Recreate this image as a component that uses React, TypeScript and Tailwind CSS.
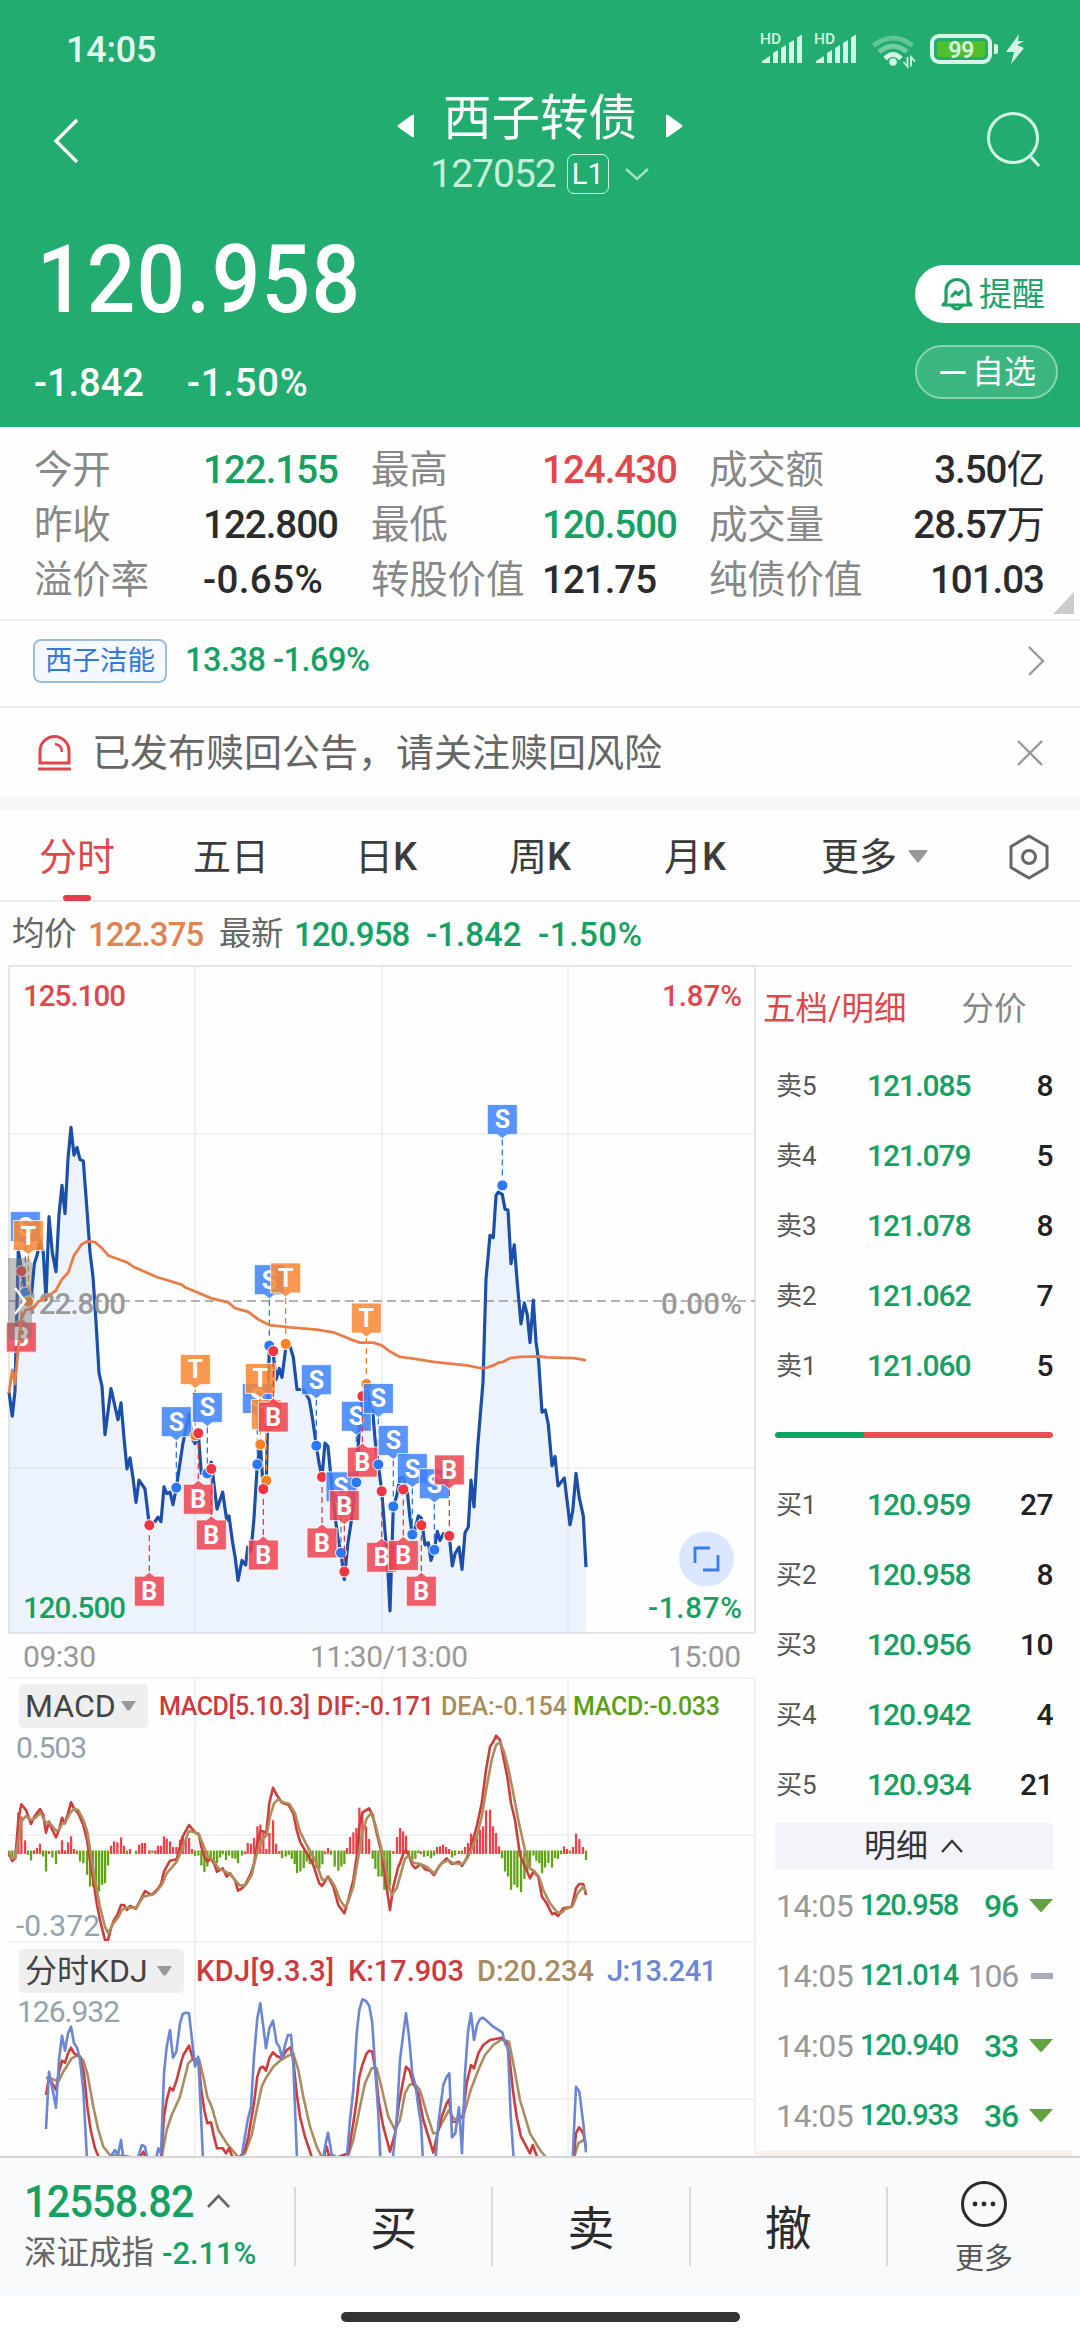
import type { ReactNode } from "react";

type Marker = { kind: "S" | "B" | "T"; x: number; y: number; below?: boolean };

const GREEN = "text-[#16a163]";
const RED = "text-[#e0474c]";
const DARK = "text-[#2b2b2b]";

const quotes = [
  { label: "今开", value: "122.155", tone: GREEN },
  { label: "最高", value: "124.430", tone: RED },
  { label: "成交额", value: "3.50亿", tone: DARK },
  { label: "昨收", value: "122.800", tone: DARK },
  { label: "最低", value: "120.500", tone: GREEN },
  { label: "成交量", value: "28.57万", tone: DARK },
  { label: "溢价率", value: "-0.65%", tone: DARK },
  { label: "转股价值", value: "121.75", tone: DARK },
  { label: "纯债价值", value: "101.03", tone: DARK },
];

const asks = [
  ["卖5", "121.085", "8"],
  ["卖4", "121.079", "5"],
  ["卖3", "121.078", "8"],
  ["卖2", "121.062", "7"],
  ["卖1", "121.060", "5"],
];

const bids = [
  ["买1", "120.959", "27"],
  ["买2", "120.958", "8"],
  ["买3", "120.956", "10"],
  ["买4", "120.942", "4"],
  ["买5", "120.934", "21"],
];

const trades = [
  { price: "120.958", qty: "96", down: true },
  { price: "121.014", qty: "106", down: false },
  { price: "120.940", qty: "33", down: true },
  { price: "120.933", qty: "36", down: true },
];

const priceLine =
  "27,968 37,1022 45,965 55,650 64,690 76,740 85,765 95,745 103,680 112,660 120,625 130,655 138,760 147,575 157,655 168,698 177,570 186,505 195,568 204,445 213,375 222,437 231,420 240,447 250,450 261,560 270,655 279,710 288,810 297,925 306,955 315,1063 333,960 354,1030 363,992 372,1070 381,1140 390,1115 399,1160 408,1215 417,1165 435,1185 448,1266 465,1258 474,1248 483,1258 492,1180 500,1195 510,1192 519,1220 529,1182 548,1085 567,1017 576,1070 585,1083 595,1060 604,1150 617,1150 634,1125 651,1230 668,1192 680,1255 687,1245 697,1300 706,1340 714,1390 726,1345 737,1355 743,1315 753,1325 762,1250 772,1130 781,1085 790,1185 799,1166 808,862 819,876 828,940 838,915 846,935 857,870 870,865 880,890 891,962 910,962 928,985 938,1030 949,1088 958,1130 966,1158 975,1082 984,1090 993,1160 1004,1240 1015,1300 1023,1328 1033,1388 1043,1310 1055,1250 1068,1170 1078,1050 1087,977 1099,950 1110,1000 1118,1010 1126,1080 1135,1130 1145,1190 1155,1280 1162,1340 1170,1458 1180,1224 1190,1200 1200,1160 1210,1160 1222,1190 1230,1250 1237,1287 1245,1275 1255,1245 1264,1250 1275,1310 1285,1305 1293,1345 1303,1321 1312,1280 1320,1300 1330,1285 1348,1290 1357,1357 1365,1330 1377,1315 1386,1365 1395,1283 1405,1270 1413,1165 1422,1225 1433,1090 1449,945 1458,715 1470,617 1480,622 1488,528 1495,520 1507,525 1515,558 1524,560 1533,680 1543,638 1552,725 1563,815 1573,768 1582,795 1590,857 1600,762 1608,855 1616,900 1626,1013 1636,1008 1645,1040 1656,1133 1665,1112 1674,1178 1693,1160 1710,1265 1718,1235 1728,1150 1738,1205 1750,1245 1758,1360";

const averageLine =
  "27,970 37,918 45,950 55,870 64,805 76,785 103,778 115,765 138,757 168,740 186,715 205,700 222,662 245,637 262,630 285,632 305,645 325,662 380,677 400,687 470,710 545,727 555,733 635,758 685,767 705,780 745,788 775,805 810,818 870,823 950,828 1000,834 1060,852 1080,857 1120,857 1145,863 1170,877 1200,889 1250,894 1300,900 1400,908 1440,914 1458,914 1480,908 1495,902 1510,900 1530,892 1560,889 1620,888 1640,890 1720,892 1740,894 1758,897";

const difLine =
  "27,640 37,663 46,655 55,540 64,493 78,510 93,552 103,530 120,507 130,525 138,578 147,545 157,570 168,592 177,570 186,533 195,550 204,520 213,487 222,505 235,520 250,555 261,600 270,660 280,720 290,790 300,840 315,900 324,900 333,865 342,840 352,825 363,795 372,795 381,810 390,798 408,806 435,753 455,765 475,745 483,732 492,695 510,662 530,658 540,620 548,590 567,555 585,577 597,585 604,620 613,650 622,665 632,655 642,670 651,695 668,685 680,710 690,700 706,722 714,752 726,745 735,735 753,700 762,670 772,610 781,572 793,575 799,580 808,490 819,443 830,465 846,488 866,495 880,520 890,570 900,605 920,640 938,670 958,730 966,738 984,710 1000,740 1015,795 1033,820 1045,780 1060,720 1070,650 1078,560 1087,518 1107,505 1118,525 1130,580 1145,640 1158,730 1170,810 1180,740 1195,680 1200,670 1210,640 1218,630 1228,650 1237,675 1246,685 1262,672 1275,688 1290,692 1302,705 1320,675 1340,655 1355,672 1377,665 1386,678 1400,655 1413,620 1430,560 1445,490 1458,390 1470,320 1480,305 1488,287 1500,300 1510,350 1522,410 1533,490 1545,540 1560,645 1575,680 1590,715 1600,695 1615,710 1626,770 1640,790 1656,822 1665,820 1674,828 1690,805 1715,800 1728,745 1738,732 1750,732 1758,765";

const deaLine =
  "27,635 37,655 46,655 55,600 64,545 78,528 93,540 108,532 122,518 135,545 150,550 168,572 177,570 186,552 195,548 213,515 222,507 235,510 250,540 262,575 272,640 285,720 300,800 315,860 325,880 340,850 355,832 365,810 380,803 408,803 430,770 450,765 465,760 485,735 500,700 530,665 545,630 567,573 595,580 608,610 620,645 640,660 655,685 670,692 690,702 720,737 737,735 755,705 768,650 785,600 800,585 810,530 822,490 835,478 850,487 868,492 885,520 900,575 920,615 945,660 967,720 990,715 1005,740 1020,780 1035,802 1045,785 1060,740 1075,650 1087,580 1100,535 1113,520 1125,550 1140,610 1155,670 1165,730 1175,765 1190,745 1200,710 1215,655 1228,648 1240,668 1260,672 1280,680 1302,700 1325,670 1345,660 1360,670 1388,672 1405,650 1430,590 1445,530 1460,440 1475,360 1488,315 1500,307 1512,335 1525,385 1540,460 1555,540 1575,630 1590,685 1605,695 1617,710 1630,750 1650,790 1670,815 1683,820 1695,808 1718,798 1733,760 1750,740 1758,755";

const macdBars =
  "27,-15 37,-22 46,-15 55,122 64,110 75,38 84,-10 93,-27 102,8 111,15 120,28 129,-15 138,-60 147,6 157,-18 168,-38 177,8 186,38 195,8 204,32 213,50 222,12 231,-8 240,-30 250,-35 261,-70 270,-105 279,-105 288,-110 297,-120 306,-100 315,-95 324,-42 333,22 342,35 352,32 363,47 372,22 381,-8 390,12 408,-8 417,25 426,30 435,30 448,8 457,-5 466,8 474,22 483,22 492,50 500,43 510,35 519,18 529,18 540,40 548,50 557,40 567,45 576,12 585,-14 595,-12 604,-42 613,-62 622,-45 632,-22 642,-30 651,-35 660,-18 668,-8 678,-26 687,-12 697,-20 706,-22 714,-35 726,-12 735,5 743,30 753,28 762,45 772,80 781,85 790,60 799,12 808,60 819,98 828,28 838,6 846,-20 857,-15 866,-10 875,-22 884,-38 891,-65 901,-60 911,-50 920,-30 929,-38 938,-40 949,-50 958,-52 967,-38 975,5 984,15 993,-10 1004,-45 1015,-58 1024,-45 1033,-38 1041,15 1050,48 1060,62 1069,75 1078,136 1087,120 1098,80 1107,42 1118,-22 1126,-52 1135,-75 1145,-75 1153,-115 1162,-115 1170,-102 1180,6 1191,48 1200,75 1209,65 1218,52 1227,-10 1237,-25 1246,-22 1255,-5 1263,5 1272,-16 1283,-14 1293,-20 1302,-12 1311,18 1320,20 1329,25 1338,18 1347,12 1356,-18 1365,-12 1377,6 1386,-8 1395,18 1404,30 1413,58 1422,45 1431,55 1440,70 1449,80 1458,128 1470,130 1479,80 1488,60 1497,20 1506,-20 1515,-60 1524,-75 1533,-115 1543,-100 1552,-108 1563,-122 1573,-82 1582,-60 1590,-45 1600,-12 1609,-28 1618,-35 1626,-65 1635,-48 1645,-35 1656,-48 1665,-20 1674,-22 1683,-8 1692,20 1701,12 1710,-6 1719,18 1728,58 1738,42 1749,18 1758,-26"
    .split(" ")
    .map((p) => p.split(",").map(Number));

const kLine =
  "138,1365 147,1310 157,1330 168,1350 177,1295 186,1262 195,1268 204,1240 213,1223 222,1240 240,1250 252,1300 262,1400 272,1470 285,1525 300,1560 415,1560 430,1535 440,1560 483,1555 492,1430 500,1380 510,1343 519,1352 530,1320 540,1280 550,1245 567,1217 580,1260 595,1260 604,1350 613,1410 622,1450 633,1447 642,1490 651,1525 668,1525 678,1540 687,1525 697,1550 715,1560 735,1530 745,1490 762,1390 772,1310 781,1283 790,1280 798,1292 808,1255 819,1237 830,1248 845,1255 860,1230 872,1222 880,1260 890,1360 900,1430 915,1490 935,1550 965,1570 980,1520 990,1560 1045,1540 1060,1450 1070,1380 1078,1310 1087,1275 1100,1240 1108,1232 1117,1235 1126,1290 1137,1390 1150,1460 1170,1535 1185,1480 1197,1390 1208,1330 1218,1280 1228,1290 1240,1330 1255,1360 1270,1440 1300,1538 1310,1490 1325,1430 1340,1390 1347,1378 1356,1445 1370,1445 1377,1430 1388,1430 1400,1330 1413,1275 1422,1285 1435,1240 1450,1215 1470,1200 1505,1193 1520,1210 1528,1250 1540,1360 1550,1430 1563,1490 1590,1540 1598,1515 1615,1560 1720,1560 1728,1480 1737,1462 1750,1480 1758,1520";

const dLine =
  "138,1313 160,1318 175,1325 190,1295 215,1255 235,1245 250,1262 262,1300 280,1400 295,1470 310,1520 330,1545 380,1548 400,1555 485,1550 500,1470 515,1425 540,1370 565,1270 580,1255 598,1260 610,1310 622,1370 635,1400 655,1470 680,1510 715,1552 735,1540 755,1485 770,1410 785,1340 800,1310 820,1280 840,1262 860,1250 880,1240 895,1290 910,1370 930,1460 950,1520 965,1550 1000,1545 1020,1560 1040,1560 1060,1500 1080,1400 1095,1330 1115,1285 1130,1285 1145,1345 1165,1430 1185,1470 1200,1440 1215,1360 1228,1335 1243,1330 1260,1350 1280,1420 1300,1480 1310,1480 1325,1450 1347,1410 1360,1435 1375,1440 1390,1430 1412,1350 1435,1290 1455,1245 1480,1215 1505,1198 1527,1205 1540,1270 1560,1380 1590,1480 1620,1530 1640,1555 1720,1560 1735,1510 1750,1500 1758,1505";

const jLine =
  "138,1467 147,1295 157,1345 168,1403 177,1260 186,1187 195,1232 204,1180 213,1160 222,1210 232,1225 240,1260 250,1350 262,1575 325,1560 345,1530 354,1545 363,1500 372,1570 412,1560 425,1515 435,1520 445,1570 466,1570 475,1525 483,1540 492,1300 500,1220 510,1170 519,1253 529,1235 540,1150 548,1122 558,1118 567,1120 576,1200 585,1280 595,1250 601,1380 610,1580 723,1560 743,1440 753,1400 762,1250 772,1135 781,1090 790,1160 798,1225 808,1165 819,1142 830,1210 838,1220 846,1255 855,1215 864,1185 873,1185 880,1270 892,1580 966,1580 975,1520 984,1478 993,1530 1000,1580 1038,1580 1050,1440 1060,1350 1070,1180 1078,1110 1087,1078 1098,1083 1108,1098 1117,1150 1126,1290 1135,1420 1142,1580 1176,1580 1190,1440 1200,1260 1210,1180 1218,1120 1227,1190 1237,1300 1247,1340 1255,1400 1263,1450 1270,1580 1305,1580 1315,1450 1330,1335 1340,1310 1348,1300 1356,1492 1366,1480 1377,1402 1386,1540 1395,1300 1404,1175 1413,1120 1422,1200 1431,1155 1440,1137 1449,1133 1460,1142 1480,1160 1507,1177 1515,1210 1524,1225 1532,1430 1543,1580 1717,1580 1728,1340 1738,1355 1750,1450 1758,1537";

// x, y is the traded point; the flag hangs 66px away from it
const markers: Marker[] = [
  { kind: "S", x: 76, y: 745 },
  { kind: "B", x: 64, y: 697, below: true },
  { kind: "T", x: 85, y: 765 },
  { kind: "B", x: 448, y: 1266, below: true },
  { kind: "S", x: 529, y: 1182 },
  { kind: "T", x: 586, y: 1065 },
  { kind: "S", x: 622, y: 1150 },
  { kind: "B", x: 595, y: 1060, below: true },
  { kind: "B", x: 634, y: 1140, below: true },
  { kind: "S", x: 772, y: 1130 },
  { kind: "T", x: 799, y: 1166 },
  { kind: "T", x: 781, y: 1085 },
  { kind: "B", x: 790, y: 1185, below: true },
  { kind: "S", x: 808, y: 864 },
  { kind: "B", x: 820, y: 876, below: true },
  { kind: "T", x: 857, y: 860 },
  { kind: "S", x: 949, y: 1088 },
  { kind: "B", x: 966, y: 1158, below: true },
  { kind: "S", x: 1023, y: 1328 },
  { kind: "B", x: 1033, y: 1370 },
  { kind: "S", x: 1069, y: 1170 },
  { kind: "T", x: 1099, y: 950 },
  { kind: "B", x: 1087, y: 977, below: true },
  { kind: "S", x: 1135, y: 1130 },
  { kind: "B", x: 1145, y: 1190, below: true },
  { kind: "S", x: 1180, y: 1224 },
  { kind: "S", x: 1237, y: 1287 },
  { kind: "B", x: 1210, y: 1186, below: true },
  { kind: "B", x: 1264, y: 1266, below: true },
  { kind: "S", x: 1303, y: 1321 },
  { kind: "B", x: 1348, y: 1290 },
  { kind: "S", x: 1507, y: 505 },
];

const flagFill = { S: "#3d82fa", B: "#ee4452", T: "#fa8733" };
const dotFill = { S: "#2878f8", B: "#ee3542", T: "#fb8123" };

function scale(points: string, sy: number, oy: number) {
  return points
    .split(" ")
    .map((p) => {
      const [x, y] = p.split(",").map(Number);
      return `${(x / 3).toFixed(1)},${(y / sy + oy).toFixed(1)}`;
    })
    .join(" ");
}

function StatusIcons() {
  const tops = [50, 45, 40, 34.5];
  return (
    <svg width="270" height="40" viewBox="755 30 270 40" fill="#d5f6e6">
      {[761, 815].map((x) => (
        <g key={x}>
          <text x={x - 1} y="44" fontSize="15.500" fontWeight="500">
            HD
          </text>
          <path d={`M${x + 1} 63v-2l8-5v7z`} />
          {tops.map((top, i) => (
            <path key={top} d={`M${x + 12 + i * 8} 63V${top + 3}l5-3V63z`} />
          ))}
        </g>
      ))}
      <g fill="none" stroke="#d5f6e6" strokeWidth="4.800">
        <path d="M873.500 45.500q19.500-15 39 0" opacity=".35" />
        <path d="M879 52q14-11.500 28 0" opacity=".45" />
        <path d="M885 58.500q8-8 16 0" />
      </g>
      <circle cx="893" cy="62" r="3.800" />
      <path d="M907.500 57v9.500l-4-4.500M911 66.500V57l4 4.500" fill="none" stroke="#d5f6e6" strokeWidth="1.800" />
      <rect x="932" y="36" width="58" height="26" rx="7" fill="none" stroke="#d5f6e6" strokeWidth="4" />
      <rect x="937" y="41" width="48" height="16" rx="2" fill="#4fc02b" />
      <path d="M994 44h2q2 0 2 3v4q0 3-2 3h-2z" />
      <text x="961" y="57.500" fontSize="23.500" fontWeight="600" textAnchor="middle" letterSpacing="-0.800">
        99
      </text>
      <path d="M1019 34l-13 18h8l-3 12 13-16-7-3 7-4h-6z" />
    </svg>
  );
}

function Header() {
  return (
    <header className="h-[427px] bg-[#22ac6f] text-white">
      <div className="flex h-[80px] items-end justify-between pl-[66px] pr-[55px]">
        <span className="mb-[12px] text-[36px] font-medium leading-none tracking-[-0.2px] text-[#e3fbef]">14:05</span>
        <div className="mb-[10px] h-10">
          <StatusIcons />
        </div>
      </div>

      <div className="flex h-[130px] justify-between pl-[52px] pr-[38px]">
        <svg className="mt-[38px]" width="30" height="46" viewBox="0 0 30 46" fill="none" stroke="#fff" strokeWidth="3.4">
          <path d="M25 2L4 23l21 21" />
        </svg>
        <div className="ml-[14px] flex flex-col items-center">
          <div className="mt-[11px] flex h-[56px] items-center gap-[28px]">
            <svg className="mt-[14px]" width="18" height="24" viewBox="0 0 18 24" fill="#fff">
              <path d="M17 2q0-2-2-1L1 11q-1 1 0 2l14 10q2 1 2-1z" />
            </svg>
            <h1 className="text-[48.5px] leading-none">西子转债</h1>
            <svg className="mt-[14px] rotate-180" width="18" height="24" viewBox="0 0 18 24" fill="#fff">
              <path d="M17 2q0-2-2-1L1 11q-1 1 0 2l14 10q2 1 2-1z" />
            </svg>
          </div>
          <div className="mt-[6px] flex h-[42px] items-center">
            <span className="text-[39px] leading-none tracking-[-1px] text-[#c5f0db]">127052</span>
            <span className="ml-[11px] flex h-[40px] w-[42px] items-center justify-center rounded-[7px] border-[1.5px] border-[#d5f6e6] text-[29px] leading-none">
              L1
            </span>
            <svg className="ml-[15px]" width="26" height="14" viewBox="0 0 26 14" fill="none" stroke="#a5e2c5" strokeWidth="2.4">
              <path d="M2 2l11 10L24 2" />
            </svg>
          </div>
        </div>
        <svg className="mt-[31px] translate-x-[2px]" width="58" height="58" viewBox="0 0 58 58" fill="none" stroke="#d5f6e6" strokeWidth="3">
          <circle cx="27" cy="27" r="24.5" />
          <path d="M45 46l8 9" />
        </svg>
      </div>

      <div className="flex h-[217px] justify-between">
        <div className="pl-[34px]">
          <p className="mt-[25px] origin-left scale-x-[0.9] pl-[3px] text-[95px] font-medium leading-[90px] tracking-[1.5px]">120.958</p>
          <div className="mt-[37px] flex gap-[43px] text-[38px] font-medium leading-[42px]">
            <span>-1.842</span>
            <span className="tracking-[0.9px]">-1.50%</span>
          </div>
        </div>
        <div className="mt-[55px] w-[165px]">
          <div className="flex h-[58px] items-center rounded-l-full bg-white pl-[25px] text-[33px] leading-none text-[#22a36a]">
            <svg width="34" height="34" viewBox="0 0 34 34" fill="none" stroke="#1fa065" strokeWidth="3.200" strokeLinejoin="round" strokeLinecap="round">
              <path d="M6 25V13.500a11 11 0 0 1 22 0V25l3 3H3z" />
              <path d="M12 29q5 6 10 0M12 19l3.500-4 3 2.500L22 14" />
            </svg>
            <span className="ml-[5px]">提醒</span>
          </div>
          <div className="mt-[22px] flex h-[54px] w-[143px] items-center whitespace-nowrap rounded-full border-2 border-[#8ad5b3] bg-white/12 pl-[23px] text-[32px] leading-none">
            <span className="mr-[6px] h-[3px] w-[26px] shrink-0 rounded-full bg-white" />
            自选
          </div>
        </div>
      </div>
    </header>
  );
}

function Quotes() {
  return (
    <section className="relative h-[194px] border-b-2 border-[#ececec] pl-[34px] pr-[36px] pt-[15px]">
      <div className="grid grid-cols-[169px_168px_171px_167px_170px_auto] text-[38.5px] leading-[55px]">
        {quotes.map((q, i) => (
          <div key={q.label} className="contents">
            <span className="whitespace-nowrap tracking-[-0.2px] text-[#888]">{q.label}</span>
            <span
              className={`whitespace-nowrap font-medium ${q.value.includes("%") ? "tracking-[0.4px]" : "tracking-[-1px]"} ${q.tone} ${i % 3 === 2 ? "text-right" : ""}`}
            >
              {q.value.replace(/[亿万]/, "")}
              <span className="font-normal">{q.value.match(/[亿万]/)?.[0]}</span>
            </span>
          </div>
        ))}
      </div>
      <svg className="absolute bottom-[5px] right-[6px]" width="21" height="22" viewBox="0 0 21 22" fill="#ccc">
        <path d="M21 0v22H0z" />
      </svg>
    </section>
  );
}

function Notices() {
  return (
    <>
      <section className="flex h-[87px] items-center border-b-2 border-[#ececec] pb-[6px] pl-[33px] pr-[35px]">
        <span className="flex h-[44px] w-[134px] items-center justify-center rounded-[8px] border-2 border-[#9dbde6] bg-[#f4f9ff] text-[27.5px] leading-none text-[#3478dc]">
          西子洁能
        </span>
        <span className="ml-[18px] text-[32.5px] font-medium leading-none tracking-[-0.5px] text-[#16a163]">13.38 -1.69%</span>
        <svg className="ml-auto" width="17" height="30" viewBox="0 0 17 30" fill="none" stroke="#999" strokeWidth="2.4">
          <path d="M1 1l14 14L1 29" />
        </svg>
      </section>
      <section className="flex h-[88px] items-center pl-[37px] pr-[37px] pt-px">
        <svg width="35" height="36" viewBox="0 0 35 36" fill="none" stroke="#e2444b" strokeWidth="3">
          <path d="M3 28V16a14.5 14.5 0 0 1 29 0v12zM1 34h33" />
          <path d="M18 9q7 1 7 8" strokeWidth="2.4" />
        </svg>
        <p className="ml-[20px] text-[38px] leading-none text-[#666]">已发布赎回公告，请关注赎回风险</p>
        <svg className="ml-auto" width="26" height="26" viewBox="0 0 26 26" stroke="#999" strokeWidth="2.4">
          <path d="M1 1l24 24M25 1L1 25" />
        </svg>
      </section>
    </>
  );
}

function Tabs() {
  return (
    <nav className="h-[106px] border-b-2 border-[#ececec] border-t-[14px] border-t-[#f7f7f7]">
      <div className="flex h-[90px] items-center pl-[39px] pr-[30px] pt-[3px] text-[38px] leading-none text-[#3c3c3c]">
        <span className="relative flex h-full w-[154px] items-center text-[#e0474c]">
          分时
          <i className="absolute bottom-[-1px] left-[24px] h-[6px] w-[28px] rounded-full bg-[#e43d49]" />
        </span>
        <span className="w-[162px]">五日</span>
        <span className="w-[154px]">
          日<span className="font-medium">K</span>
        </span>
        <span className="w-[155px]">
          周<span className="font-medium">K</span>
        </span>
        <span className="w-[157px]">
          月<span className="font-medium">K</span>
        </span>
        <span className="flex items-center">
          更多
          <svg className="ml-[11px]" width="20" height="13" viewBox="0 0 20 13" fill="#999">
            <path d="M1 0h18q1 0 0 2l-8 10q-1 1-2 0L1 2q-1-2 0-2z" />
          </svg>
        </span>
        <svg className="ml-auto" width="42" height="46" viewBox="0 0 42 46" fill="none" stroke="#666" strokeWidth="3" strokeLinejoin="round">
          <path d="M21 2l18 10.500v21L21 44 3 33.500v-21z" />
          <circle cx="21" cy="23" r="6.500" />
        </svg>
      </div>
    </nav>
  );
}

function Flag({ kind, x, y, below }: Marker) {
  const cx = x / 3;
  const cy = y / 2.24 - 5;
  const fy = below ? cy + 66 : cy - 66;
  const edge = below ? fy - 18 : fy + 18;
  const d = below
    ? `M${cx - 15} ${fy - 15}h10l5-4 5 4h10v30h-30z`
    : `M${cx - 15} ${fy - 15}h30v30h-10l-5 4-5-4h-10z`;
  return (
    <g>
      <path d={`M${cx} ${cy}V${edge}`} stroke={dotFill[kind]} strokeWidth="1.3" strokeDasharray="6 4" />
      <circle cx={cx} cy={cy} r="5.500" fill={dotFill[kind]} stroke="#fff" strokeWidth="1" />
      <path d={d} fill={flagFill[kind]} fillOpacity=".86" stroke="#fff" strokeOpacity=".8" strokeWidth="1" strokeLinejoin="round" />
      <text x={cx} y={fy + 9} fontSize="25" fontWeight="700" fill="#fff" textAnchor="middle">
        {kind}
      </text>
    </g>
  );
}

function PriceChart() {
  const line = scale(priceLine, 2.24, -5);
  return (
    <svg className="block" width="756" height="711" viewBox="0 0 756 711" fontWeight="500" fontSize="29.500">
      <path d="M195 1v667M382 1v667M568 1v667M9 169h746M9 503h746" stroke="#ededed" strokeWidth="1.500" />
      <rect x="9" y="1" width="746" height="667" fill="none" stroke="#e6e6e6" strokeWidth="2" />
      <polygon points={`9,668 ${line} 586,668`} fill="#c8dbfa" fillOpacity=".3" />
      <path d="M9 336h746" stroke="#999" strokeWidth="1.500" strokeDasharray="9 5" />
      <polyline points={line} fill="none" stroke="#1c50a8" strokeWidth="3.200" strokeLinejoin="round" />
      <g fill="#e0474c">
        <text x="23" y="41" textLength="103">125.100</text>
        <text x="662" y="41" textLength="80">1.87%</text>
      </g>
      <g fill="#999">
        <text x="23" y="349" textLength="103">122.800</text>
        <text x="661" y="349" textLength="81">0.00%</text>
      </g>
      <g fill="#16a163">
        <text x="23" y="653" textLength="103">120.500</text>
        <text x="648" y="653" textLength="94">-1.87%</text>
      </g>
      {markers.map((m, i) => (
        <Flag key={i} {...m} />
      ))}
      <polyline points={scale(averageLine, 2.24, -5)} fill="none" stroke="#e87d47" strokeWidth="2.800" strokeLinejoin="round" />
      <path d="M8 293h16q8 0 8 8v66q0 8-8 8H8z" fill="#777" fillOpacity=".45" />
      <path d="M15 323l10 13-10 13" fill="none" stroke="#fff" strokeWidth="2.500" />
      <circle cx="706.500" cy="594" r="27.500" fill="#dbe7fe" />
      <path d="M710 583h-15v15M703 605h15v-15" fill="none" stroke="#3b7de8" strokeWidth="2.800" />
      <g fill="#999" fontSize="30" fontWeight="400">
        <text x="23" y="702" textLength="73">09:30</text>
        <text x="310" y="702" textLength="158">11:30/13:00</text>
        <text x="668" y="702" textLength="73">15:00</text>
      </g>
    </svg>
  );
}

function Panel({ height, label, legend, chip, children }: { height: string; label: string; legend: ReactNode; chip: string; children: ReactNode }) {
  return (
    <div className={`relative overflow-hidden ${height}`}>
      {children}
      <div className="absolute left-[19px] top-[8px] flex h-[44px] items-center whitespace-nowrap">
        <span className={`flex h-[44px] shrink-0 items-center justify-between rounded-[5px] bg-[#efefef] pl-[6px] pr-[12px] text-[32px] leading-none text-[#444] ${chip}`}>
          {label}
          <svg width="15" height="10" viewBox="0 0 15 10" fill="#999">
            <path d="M0 0h15L9 9q-1.500 1-3 0z" />
          </svg>
        </span>
        {legend}
      </div>
    </div>
  );
}

function MacdPanel() {
  return (
    <Panel
      height="h-[265px]"
      label="MACD"
      chip="w-[129px]"
      legend={
        <svg className="block" width="600" height="44" viewBox="148 0 600 44" fontSize="25" fontWeight="500">
          <text x="159" y="31" textLength="151" fill="#cb3b3e">MACD[5.10.3]</text>
          <text x="317" y="31" textLength="117" fill="#cb3b3e">DIF:-0.171</text>
          <text x="441" y="31" textLength="126" fill="#a98d60">DEA:-0.154</text>
          <text x="573" y="31" textLength="147" fill="#5a9e1a">MACD:-0.033</text>
        </svg>
      }
    >
      <svg className="block" width="756" height="265" viewBox="0 1676 756 265">
        <path d="M195 1678v264M382 1678v264M568 1678v264M755 1678v264M8 1678h748M8 1835h748" stroke="#ededed" strokeWidth="1.500" />
        <g fill="#94a3ae" fontSize="30">
          <text x="16" y="1758" textLength="71">0.503</text>
          <text x="16" y="1936" textLength="84">-0.372</text>
        </g>
        {macdBars.map(([x, h]) => (
          <rect
            key={x}
            x={x / 3 - 1.1}
            y={h > 0 ? 1853 - h / 3 : 1850.500}
            width="2.300"
            height={Math.abs(h) / 3 + 1}
            fill={h > 0 ? "#f0414a" : "#62a315"}
          />
        ))}
        <polyline points={scale(difLine, 3, 1640)} fill="none" stroke="#cd3d3c" strokeWidth="2.600" strokeLinejoin="round" />
        <polyline points={scale(deaLine, 3, 1640)} fill="none" stroke="#ae8d5c" strokeWidth="2.600" strokeLinejoin="round" />
      </svg>
    </Panel>
  );
}

function KdjPanel() {
  return (
    <Panel
      height="h-[215px]"
      label="分时KDJ"
      chip="w-[165px]"
      legend={
        <svg className="block" width="550" height="44" viewBox="184 0 550 44" fontSize="29" fontWeight="500">
          <text x="196" y="32" textLength="138" fill="#cb3b3e">KDJ[9.3.3]</text>
          <text x="348" y="32" textLength="116" fill="#cb3b3e">K:17.903</text>
          <text x="477" y="32" textLength="117" fill="#a98d60">D:20.234</text>
          <text x="607" y="32" textLength="110" fill="#6a86d4">J:13.241</text>
        </svg>
      }
    >
      <svg className="block" width="756" height="215" viewBox="0 1941 756 215">
        <path d="M195 1942v215M382 1942v215M568 1942v215M755 1942v215M8 1942h748M8 2099h748" stroke="#ededed" strokeWidth="1.500" />
        <text x="17" y="2022" fontSize="30" fill="#94a3ae" textLength="103">126.932</text>
        <g fill="none" strokeWidth="2.600" strokeLinejoin="round">
          <polyline points={scale(dLine, 3, 1640)} stroke="#a98d60" />
          <polyline points={scale(kLine, 3, 1640)} stroke="#cd3d3c" />
          <polyline points={scale(jLine, 3, 1640)} stroke="#6a86d4" />
        </g>
      </svg>
    </Panel>
  );
}

function BookRow({ row }: { row: string[] }) {
  return (
    <div className="flex h-[70.1px] shrink-0 items-center pl-[20px] pr-[27px] leading-none">
      <span className="w-[91px] text-[26px] text-[#555]">{row[0]}</span>
      <span className="text-[30px] font-medium tracking-[-1px] text-[#16a163]">{row[1]}</span>
      <span className="ml-auto text-[30px] font-medium tracking-[-0.5px] text-[#222]">{row[2]}</span>
    </div>
  );
}

function OrderBook() {
  return (
    <aside className="flex w-[324px] flex-col">
      <div className="mr-[8px] flex h-[86px] shrink-0 items-center gap-[55px] border-t-2 border-[#ececec] pl-[7px] text-[32.5px] leading-none">
        <span className="text-[#e0474c]">五档/明细</span>
        <span className="text-[#888]">分价</span>
      </div>
      {asks.map((r) => (
        <BookRow key={r[0]} row={r} />
      ))}
      <div className="my-[30px] ml-[19px] mr-[27px] flex h-[8px] shrink-0 items-center">
        <span className="h-[6px] w-[89px] rounded-l-full bg-[#0da563]" />
        <span className="h-[6px] flex-1 rounded-r-full bg-[#e94f4f]" />
      </div>
      {bids.map((r) => (
        <BookRow key={r[0]} row={r} />
      ))}
      <div className="ml-[19px] mr-[27px] mt-[3px] flex h-[47px] shrink-0 items-center justify-center gap-[12px] bg-[#f3f4f9] text-[32px] leading-none text-[#333]">
        明细
        <svg width="24" height="14" viewBox="0 0 24 14" fill="none" stroke="#333" strokeWidth="2.200">
          <path d="M2 13L12 2l10 11" />
        </svg>
      </div>
      <div className="h-px shrink-0" />
      {trades.map((t) => (
        <div key={t.price} className="flex h-[70px] shrink-0 items-center pl-[20px] pr-[27px] leading-none">
          <span className="w-[84px] text-[32px] tracking-[-0.5px] text-[#999]">14:05</span>
          <span className="text-[29px] font-medium tracking-[-1.3px] text-[#16a163]">{t.price}</span>
          <span className={`ml-auto mr-[11px] text-[32px] tracking-[-1.2px] ${t.down ? "font-medium text-[#16a163]" : "text-[#999]"}`}>
            {t.qty}
          </span>
          <svg width="24" height="14" viewBox="0 0 24 14" fill={t.down ? "#62a33f" : "#a5aebb"}>
            <path d={t.down ? "M0 0h24L13 12.500q-1 .8-2 0z" : "M2 4h22v6H2z"} />
          </svg>
        </div>
      ))}
      <div className="mr-[8px] mt-auto h-[7px] shrink-0 bg-[#fdeeee]" />
    </aside>
  );
}

function Footer() {
  return (
    <footer>
      <div className="flex h-[140px] border-t-2 border-[#d3d4d8] bg-[#f9fafc]">
        <div className="w-[294px] pl-[24px]">
          <div className="mt-[20px] flex h-[46px] items-center">
            <span className="w-[171px] origin-left scale-x-[0.92] text-[45px] font-medium leading-none tracking-[-0.9px] text-[#16a163]">12558.82</span>
            <svg className="ml-[12px]" width="23" height="14" viewBox="0 0 23 14" fill="none" stroke="#666" strokeWidth="2.600">
              <path d="M1 13L11.500 2 22 13" />
            </svg>
          </div>
          <div className="mt-[11px] flex h-[36px] items-center whitespace-nowrap leading-none">
            <span className="text-[32.500px] text-[#666]">深证成指</span>
            <span className="ml-[8px] text-[31px] font-medium tracking-[-0.1px] text-[#16a163]">-2.11%</span>
          </div>
        </div>
        {["买", "卖", "撤"].map((action) => (
          <div key={action} className="mt-[29px] flex h-[79px] w-[197.300px] items-center justify-center border-l-2 border-[#d9dade] pt-[3px] text-[47px] leading-none text-[#2b2b2b]">
            {action}
          </div>
        ))}
        <div className="mt-[29px] flex h-[79px] flex-1 flex-col items-center border-l-2 border-[#d9dade] text-[29px] leading-none text-[#555]">
          <svg className="mt-[-7px] shrink-0" width="48" height="48" viewBox="0 0 48 48" fill="#2b2b2b">
            <circle cx="24" cy="24" r="21.500" fill="none" stroke="#2b2b2b" strokeWidth="3" />
            <circle cx="15" cy="24" r="2.400" />
            <circle cx="24" cy="24" r="2.400" />
            <circle cx="33" cy="24" r="2.400" />
          </svg>
          <span className="mt-[17px]">更多</span>
        </div>
      </div>
      <div className="flex h-[43px] justify-center bg-white pt-[16px]">
        <div className="h-[10px] w-[399px] rounded-full bg-[#333]" />
      </div>
    </footer>
  );
}

export default function App() {
  return (
    <div className="h-[2340px] w-[1080px] overflow-hidden bg-[#fefefe] font-[Roboto,'Noto_Sans_CJK_SC',sans-serif]">
      <Header />
      <Quotes />
      <Notices />
      <Tabs />
      <div className="flex h-[63px] items-center whitespace-nowrap pl-[12px] pt-[2px] text-[33px] leading-none tracking-[-0.6px]">
        <span className="w-[76px] text-[32.500px] text-[#666]">均价</span>
        <span className="w-[131px] font-medium tracking-[-0.9px] text-[#dd8452]">122.375</span>
        <span className="w-[75px] text-[32.500px] text-[#666]">最新</span>
        <span className="w-[132px] font-medium tracking-[-0.9px] text-[#16a163]">120.958</span>
        <span className="w-[112px] font-medium tracking-[0px] text-[#16a163]">-1.842</span>
        <span className="font-medium tracking-[0.6px] text-[#16a163]">-1.50%</span>
      </div>
      <main className="flex h-[1191px] overflow-hidden">
        <div className="w-[756px] shrink-0">
          <PriceChart />
          <MacdPanel />
          <KdjPanel />
        </div>
        <OrderBook />
      </main>
      <Footer />
    </div>
  );
}
